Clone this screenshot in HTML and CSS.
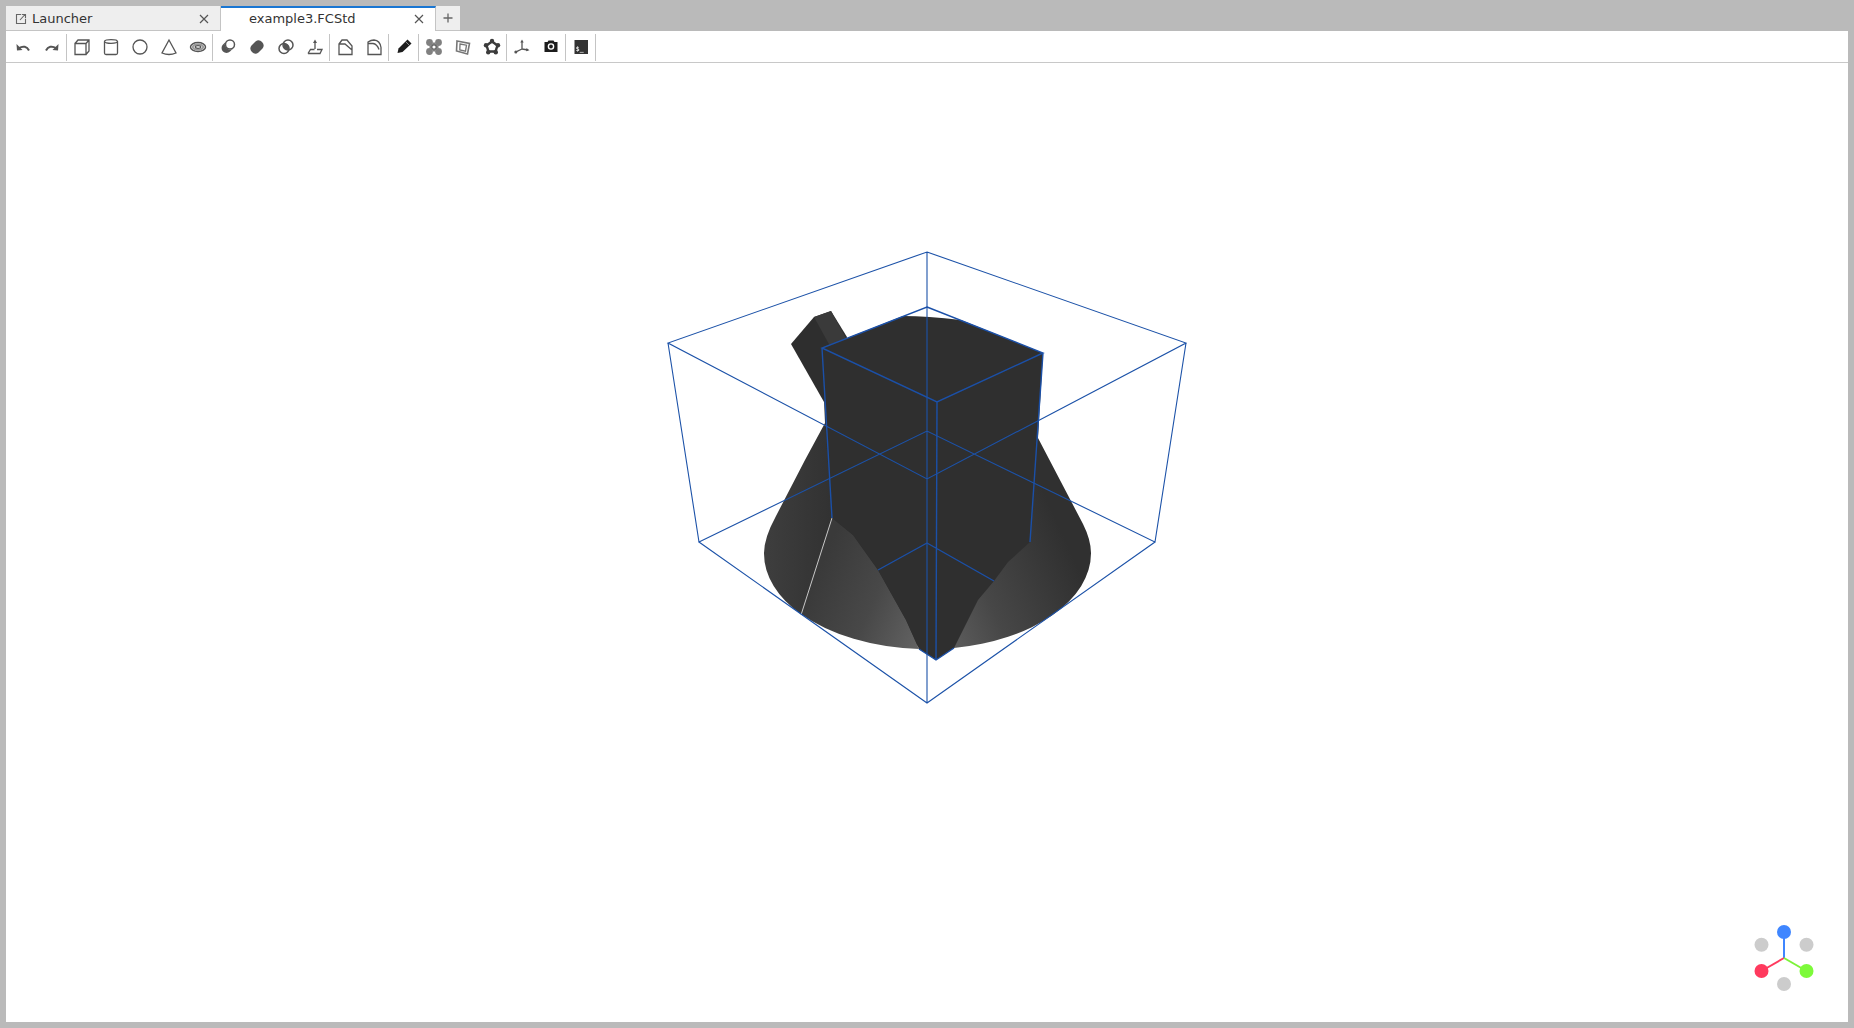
FILE: index.html
```html
<!DOCTYPE html>
<html>
<head>
    <title>example3.FCStd</title>
    <link rel="stylesheet" href="styles.css">
</head>
<body>
    <div class="tabbar">
        <div class="tab">
            <svg class="tab-icon" viewBox="0 0 12 12"><path d="M6 1.5H1.5v9h9V6M5 7l5-5.5M6.8 1.5h3.7v3.7"/></svg>
            <span class="tab-label">Launcher</span>
            <svg class="tab-close" viewBox="0 0 10 10"><path d="M1 1l8 8M9 1l-8 8"/></svg>
        </div>
        <div class="tab tab-active">
            <span class="tab-label">example3.FCStd</span>
            <svg class="tab-close" viewBox="0 0 10 10"><path d="M1 1l8 8M9 1l-8 8"/></svg>
        </div>
        <div class="tab-add">
            <svg viewBox="0 0 10 10"><path d="M5 0.5v9M0.5 5h9"/></svg>
        </div>
    </div>

    <div class="toolbar">
        <!-- undo / redo -->
        <div class="tool"><svg viewBox="0 0 18 18"><path class="thick" d="M15 12.5C13 8.5 9 7.5 5 10"/><path class="solid" d="M2.5 6l.5 6.5 5.5-.5z"/></svg></div>
        <div class="tool"><svg viewBox="0 0 18 18"><path class="thick" d="M3 12.5C5 8.5 9 7.5 13 10"/><path class="solid" d="M15.5 6l-.5 6.5-5.5-.5z"/></svg></div>
        <div class="sep"></div>

        <!-- primitives -->
        <div class="tool"><svg viewBox="0 0 18 18"><path d="M2 5.5h11v11H2zM2 5.5L5 2h11v11l-3 3.5M13 5.5L16 2"/></svg></div>
        <div class="tool"><svg viewBox="0 0 18 18"><path d="M2.5 3.5V15q0 1.5 1.5 1.5h10q1.5 0 1.5-1.5V3.5"/><ellipse cx="9" cy="3.5" rx="6.5" ry="1.8"/></svg></div>
        <div class="tool"><svg viewBox="0 0 18 18"><circle cx="9" cy="9" r="7"/></svg></div>
        <div class="tool"><svg viewBox="0 0 18 18"><path d="M9 2L2 15q7 3 14 0z"/></svg></div>
        <div class="tool"><svg viewBox="0 0 18 18"><ellipse cx="9" cy="9" rx="7.5" ry="4.5" stroke-width="1.5"/><ellipse cx="9" cy="9" rx="5.2" ry="2.8" class="mid"/><ellipse cx="9" cy="9" rx="2.8" ry="1.3"/></svg></div>
        <div class="sep"></div>

        <!-- booleans -->
        <div class="tool"><svg viewBox="0 0 18 18"><path class="solid" d="M4 6.5a4.8 4.8 0 0 0 7 7l3-3a5 5 0 0 1-7-7z"/><circle cx="11" cy="6.5" r="4.5" stroke-width="1.5"/></svg></div>
        <div class="tool"><svg viewBox="0 0 18 18"><path class="solid" d="M3.5 7.5l4-4a5 5 0 0 1 7 7l-4 4a5 5 0 0 1-7-7z"/></svg></div>
        <div class="tool"><svg viewBox="0 0 18 18"><circle cx="7" cy="10.5" r="5" stroke-width="1.5"/><circle cx="11" cy="7" r="5" stroke-width="1.5"/><path class="solid" d="M6.5 5.5a5 5 0 0 1 5.5 6.5 5 5 0 0 1-5.5-6.5z"/></svg></div>
        <div class="tool"><svg viewBox="0 0 18 18"><path d="M2 15.5l2.5-4h4M11 11.5h5l-2 4H2M9 11V4"/><path class="solid" d="M9 1.5L7 5h4z"/></svg></div>
        <div class="sep"></div>

        <!-- chamfer / fillet -->
        <div class="tool"><svg viewBox="0 0 18 18"><path d="M3 6L6 2h5l5 6v8.5H3zM3 6h6l7 6"/></svg></div>
        <div class="tool"><svg viewBox="0 0 18 18"><path d="M3 4q3-2 6-2 6 .5 7 7.5v7H3zM3 5.5h5q4 .5 6 6"/></svg></div>
        <div class="sep"></div>

        <!-- sketch -->
        <div class="tool"><svg viewBox="0 0 18 18"><path class="black" d="M2.5 15l1-4.5l9-9l4 4l-9 8.500z"/><path class="cut" d="M10.5 3.5l4 4"/></svg></div>
        <div class="sep"></div>

        <!-- part tools -->
        <div class="tool"><svg viewBox="0 0 18 18"><circle class="soft" cx="4.5" cy="4.5" r="3.4"/><circle class="soft" cx="13.5" cy="4.5" r="3.4"/><circle class="soft" cx="4.5" cy="13.5" r="3.4"/><circle class="soft" cx="13.5" cy="13.5" r="3.4"/><path class="soft" d="M9 4l5 5-5 5-5-5z"/><circle class="hole" cx="9" cy="9" r="2.2"/></svg></div>
        <div class="tool"><svg viewBox="0 0 18 18"><path class="grey" d="M3 3l12.5 2.5-2 10.5L2.5 13z" stroke-width="1.6"/><path class="grey" d="M6 6l6.5 1.2-1 6L5.8 12z"/></svg></div>
        <div class="tool"><svg viewBox="0 0 18 18"><path class="ring" d="M9 3.5l5.5 4-2 6h-7l-2-6z"/><circle class="dot" cx="9" cy="3" r="2.2"/><circle class="dot" cx="15" cy="7.2" r="2.2"/><circle class="dot" cx="12.8" cy="14.2" r="2.2"/><circle class="dot" cx="5.2" cy="14.2" r="2.2"/><circle class="dot" cx="3" cy="7.2" r="2.2"/></svg></div>
        <div class="sep"></div>

        <!-- axis, screenshot, console -->
        <div class="tool"><svg viewBox="0 0 18 18"><path d="M9 11V3.5M9 11l-6 2.800M9 11l6 1"/><path class="solid" d="M9 1.5L7.3 4.5h3.400zM16.500 12.300l-3-2.300-.5 3.200z"/><circle class="solid" cx="2.800" cy="14" r="1.500"/></svg></div>
        <div class="tool"><svg viewBox="0 0 18 18"><path class="black" d="M2.5 4h3l1-1.5h5l1 1.5h3v10h-13z"/><circle class="lens" cx="9" cy="8.500" r="2.600"/></svg></div>
        <div class="sep"></div>
        <div class="tool"><svg viewBox="0 0 18 18"><rect class="term" x="2.5" y="2" width="13.5" height="14"/><text class="term-text" x="3.8" y="12.5">$_</text></svg></div>
        <div class="sep"></div>
    </div>

    <div class="viewport">
        <!-- viewBox is in page pixels so the model points can be read off the window -->
        <svg class="scene" viewBox="6 63 1842 959">
            <defs>
                <linearGradient id="litLeft" gradientUnits="userSpaceOnUse" x1="925" y1="640" x2="810" y2="590">
                    <stop offset="0" stop-color="#646464"/>
                    <stop offset="0.5" stop-color="#484848"/>
                    <stop offset="1" stop-color="#3a3a3a"/>
                </linearGradient>
                <linearGradient id="litRight" gradientUnits="userSpaceOnUse" x1="955" y1="650" x2="1088" y2="590">
                    <stop offset="0" stop-color="#5c5c5c"/>
                    <stop offset="0.35" stop-color="#474747"/>
                    <stop offset="1" stop-color="#303030"/>
                </linearGradient>
                <linearGradient id="coneSide" gradientUnits="userSpaceOnUse" x1="764" y1="500" x2="830" y2="500">
                    <stop offset="0" stop-color="#3e3e3e"/>
                    <stop offset="1" stop-color="#323232"/>
                </linearGradient>
            </defs>

            <!-- handle -->
            <path class="handle" d="M791 344L814 317L831 311L847 337L830 400L824 402z"/>
            <path class="handle-side" d="M814 317L831 311L848 342L830 346z"/>

            <!-- cone -->
            <path fill="url(#coneSide)" d="M825 423L805 460L776 516Q764 538 764 553A163.5 96 0 0 0 802 615L930 649V430z"/>
            <path fill="url(#litRight)" d="M1038 438L1083 524Q1091 540 1091 553A163.5 96 0 0 1 954 648L927 500z"/>
            <path fill="url(#litLeft)" d="M832 518L853 535L878 570L906 620L919 649A163.5 96 0 0 1 801 614z"/>
            <path class="seam" d="M832 518L801 615"/>

            <!-- prism -->
            <path fill="#2f2f2f" d="M822 348L903 316Q927 316 961 320L1043 353L1038 438L1030 542L1008 562L994 581L978 600L954 648L936 660L919 649L906 620L878 570L853 535L832 518L825 423L824 400z"/>

            <!-- bounding boxes -->
            <g class="wire">
                <path d="M927 252L1186 343L927 479L668 343zM927 252V703M699 542L927 431L1155 542L927 703zM668 343L699 542M1186 343L1155 542"/>
            </g>
            <g class="wire wire-inner">
                <path d="M927 307L1043 353L937 402L822 348zM822 348L832 518M1043 353L1030 542M937 402L936 660M927 543L878 570M927 543L994 581M919 649L936 660L954 648"/>
            </g>
        </svg>

        <!-- navigation gizmo -->
        <svg class="gizmo" viewBox="0 0 60 66">
            <path class="axis-z" d="M30 33V7"/>
            <path class="axis-x" d="M30 33L7.5 46"/>
            <path class="axis-y" d="M30 33L52.5 46"/>
            <circle class="ball-off" cx="7.5" cy="19.7" r="7"/>
            <circle class="ball-off" cx="52.5" cy="19.7" r="7"/>
            <circle class="ball-off" cx="30" cy="59" r="7"/>
            <circle class="ball-z" cx="30" cy="7" r="7"/>
            <circle class="ball-x" cx="7.5" cy="46" r="7"/>
            <circle class="ball-y" cx="52.5" cy="46" r="7"/>
        </svg>
    </div>
</body>
</html>
```

FILE: styles.css
```css
* {
    box-sizing: border-box;
}

html, body {
    height: 100%;
}

body {
    margin: 0;
    padding: 6px;
    background-color: #bababa;
    font-family: "DejaVu Sans", sans-serif;
    font-size: 13px;
    color: #333;
    display: flex;
    flex-direction: column;
    overflow: hidden;
}

/* tabs */
.tabbar {
    display: flex;
    height: 25px;
    flex: none;
}

.tab {
    width: 215px;
    display: flex;
    align-items: center;
    padding: 1px 11px 0 9px;
    background-color: #eeeeee;
    border-right: 1px solid #c4c4c4;
    border-bottom: 1px solid #c4c4c4;
}

.tab-active {
    background-color: #fff;
    border-top: 2px solid #1976d2;
    border-bottom: none;
    padding: 0 11px 2px 28px;
}

.tab-icon {
    width: 12px;
    height: 12px;
    margin-right: 5px;
    fill: none;
    stroke: #666;
    stroke-width: 1.1;
}

.tab-label {
    flex: 1;
    white-space: nowrap;
}

.tab-close {
    width: 10px;
    height: 10px;
    fill: none;
    stroke: #555;
    stroke-width: 1.2;
}

.tab-add {
    width: 24px;
    display: flex;
    align-items: center;
    justify-content: center;
    background-color: #eeeeee;
    border-bottom: 1px solid #c4c4c4;
}

.tab-add svg {
    width: 10px;
    height: 10px;
    fill: none;
    stroke: #666;
    stroke-width: 1.3;
}

/* toolbar */
.toolbar {
    display: flex;
    align-items: center;
    height: 32px;
    flex: none;
    padding: 1px 0 0 2px;
    background-color: #fff;
    border-bottom: 1px solid #c8c8c8;
}

.tool {
    width: 29px;
    height: 29px;
    display: flex;
    align-items: center;
    justify-content: center;
}

.tool svg {
    width: 18px;
    height: 18px;
    fill: none;
    stroke: #555;
    stroke-width: 1.3;
    filter: blur(0.3px);
}

.tool .thick {
    stroke-width: 2;
}

.tool .mid {
    stroke: #999;
    stroke-width: 2;
}

.tool .solid {
    fill: #555;
    stroke: none;
}

.tool .soft {
    fill: #808080;
    stroke: none;
}

.tool .hole {
    fill: #fff;
    stroke: #666;
    stroke-width: 1.2;
}

.tool .grey {
    stroke: #777;
}

.tool .ring {
    fill: #fff;
    stroke: #3c3c3c;
    stroke-width: 2.4;
}

.tool .dot {
    fill: #3c3c3c;
    stroke: none;
}

.tool .black {
    fill: #1c1c1c;
    stroke: none;
}

.tool .cut {
    stroke: #aaa;
    stroke-width: 0.8;
}

.tool .lens {
    fill: #1c1c1c;
    stroke: #fff;
    stroke-width: 1.4;
}

.tool .term {
    fill: #333;
    stroke: none;
}

.tool .term-text {
    fill: #eee;
    stroke: none;
    font-family: "DejaVu Sans Mono", monospace;
    font-size: 6.5px;
    font-weight: bold;
}

.sep {
    width: 1px;
    height: 27px;
    background-color: #c4c4c4;
}

/* 3d view */
.viewport {
    flex: 1;
    position: relative;
    background-color: #fff;
    min-height: 0;
}

.scene {
    display: block;
    width: 100%;
    height: 100%;
}

.handle {
    fill: #2e2e2e;
}

.handle-side {
    fill: #3a3a3a;
}

.seam {
    fill: none;
    stroke: #c8c8c8;
    stroke-width: 1;
}

.wire {
    fill: none;
    stroke: #1c52a8;
    stroke-width: 1.1;
}

.wire-inner {
    stroke: #1b50a8;
    stroke-width: 1.4;
}

.gizmo {
    position: absolute;
    right: 34px;
    bottom: 31px;
    width: 60px;
    height: 66px;
    overflow: visible;
}

.axis-z,
.axis-x,
.axis-y {
    stroke-width: 2;
    fill: none;
}

.axis-z {
    stroke: #3f86ff;
}

.axis-x {
    stroke: #ff3a5e;
}

.axis-y {
    stroke: #7df23a;
}

.ball-off {
    fill: #cccccc;
}

.ball-z {
    fill: #3f86ff;
}

.ball-x {
    fill: #ff3a5e;
}

.ball-y {
    fill: #7dfa3a;
}
```
